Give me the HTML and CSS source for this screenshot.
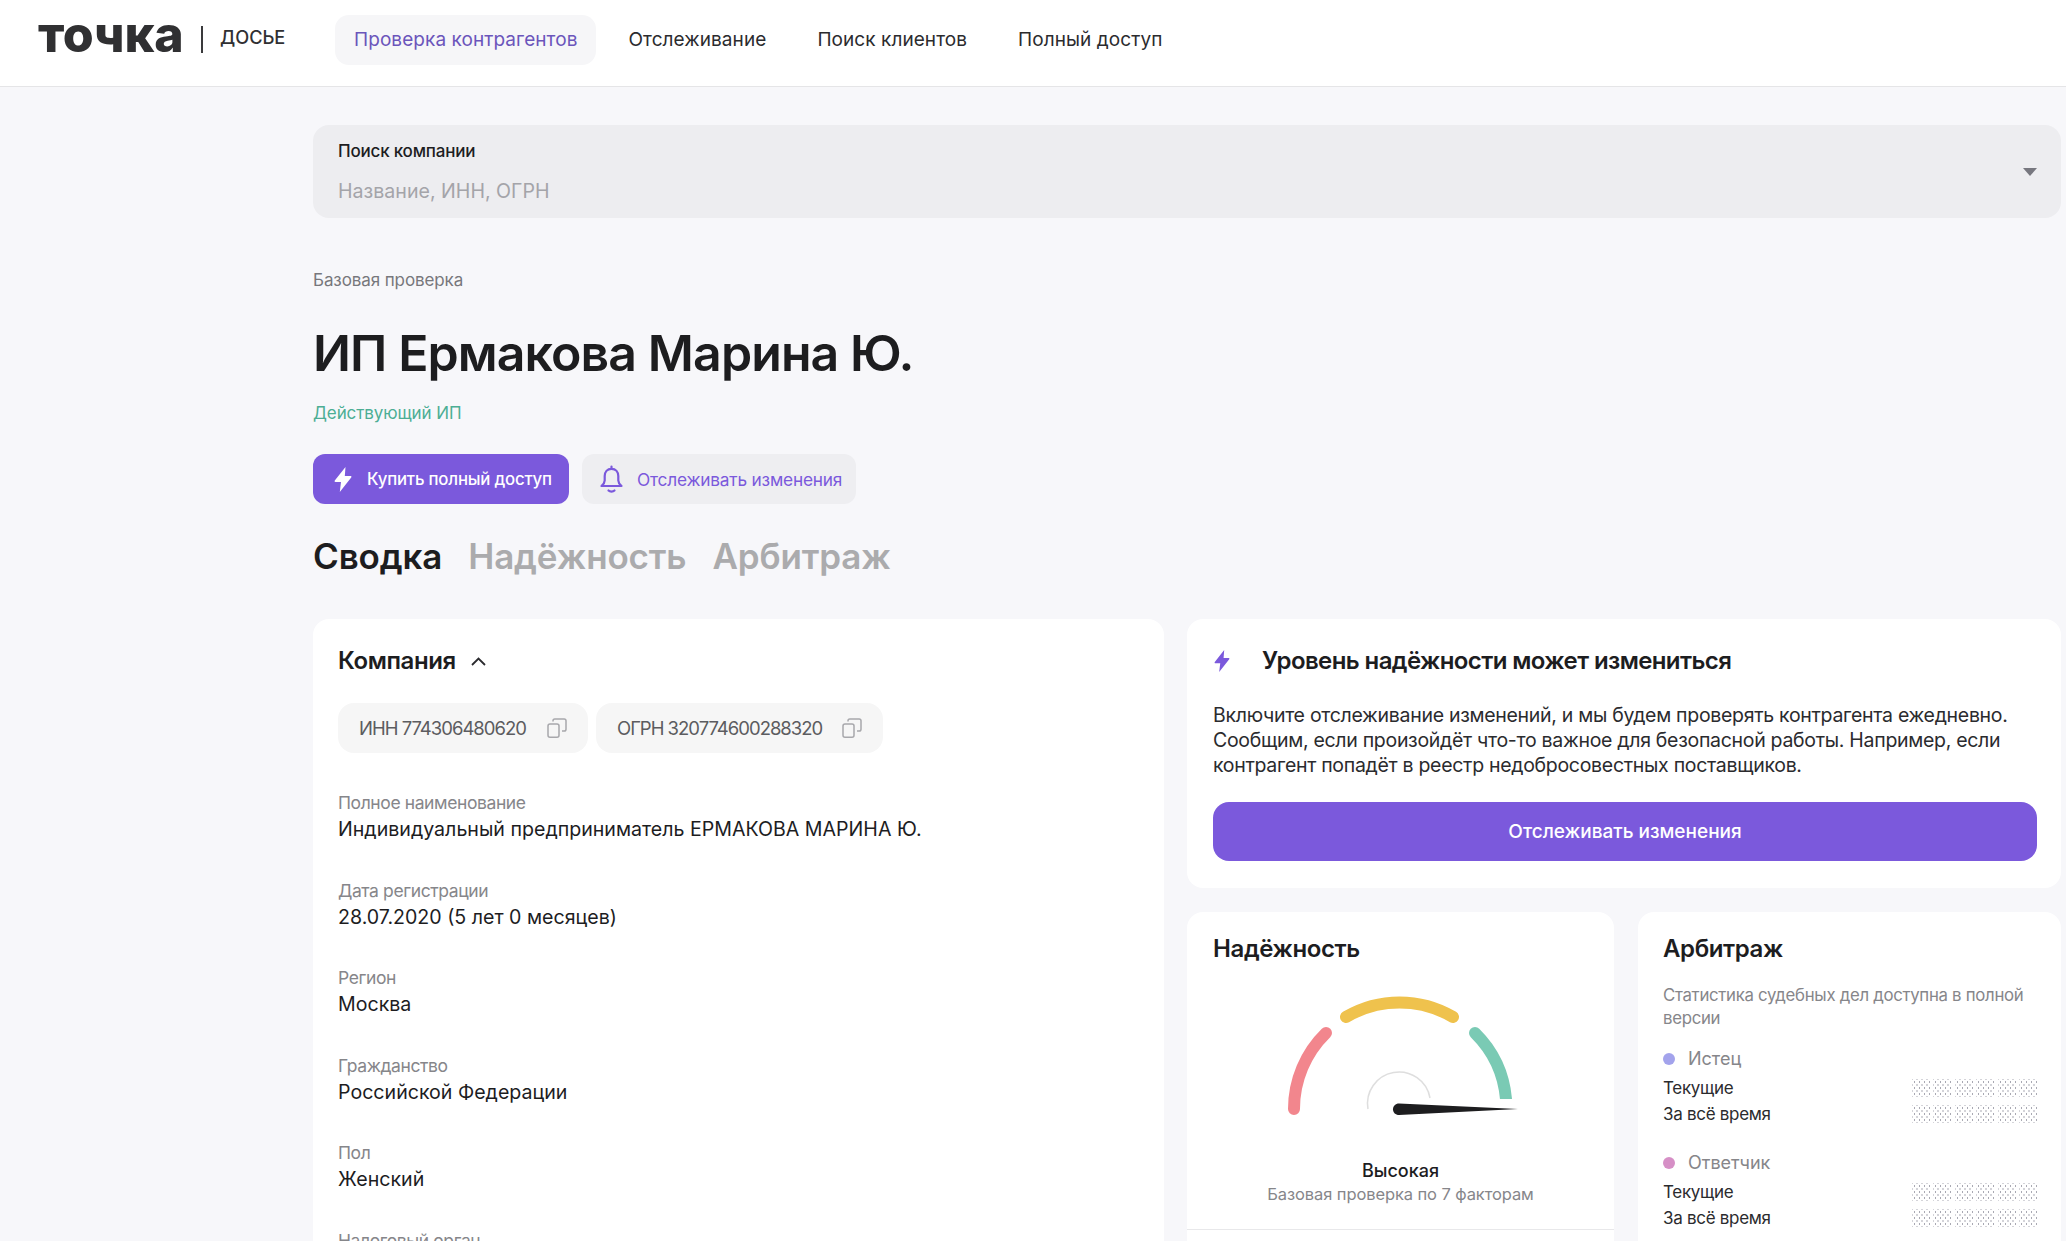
FILE: index.html
```html
<!DOCTYPE html>
<html lang="ru">
<head>
<meta charset="utf-8">
<title>Точка Досье</title>
<link rel="stylesheet" href="styles.css">
</head>
<body>
<header class="topbar">
  <div class="brand"><span class="logo">точка</span><span class="brand-sep"></span><span class="brand-sub">ДОСЬЕ</span></div>
  <nav class="nav">
    <a class="nav-item active">Проверка контрагентов</a>
    <a class="nav-item">Отслеживание</a>
    <a class="nav-item">Поиск клиентов</a>
    <a class="nav-item">Полный доступ</a>
  </nav>
</header>
<main class="page">
  <section class="search">
    <div class="search-label">Поиск компании</div>
    <div class="search-ph">Название, ИНН, ОГРН</div>
    <svg class="search-arrow" width="14" height="8" viewBox="0 0 14 8"><path d="M0 0h14L7 8z" fill="#77777f"/></svg>
  </section>
  <div class="crumb">Базовая проверка</div>
  <h1 class="title">ИП Ермакова Марина Ю.</h1>
  <div class="status">Действующий ИП</div>
  <div class="actions">
    <button class="btn btn-primary">
      <svg width="18" height="25" viewBox="0 0 18 25"><path d="M11.500 0 .8 13.600c-.5.7-.2 1.400.7 1.400H7L5.800 25 17.200 10.400c.5-.7.2-1.400-.7-1.400H10.800z" fill="#fff"/></svg>
      Купить полный доступ
    </button>
    <button class="btn btn-soft">
      <svg width="23" height="28" viewBox="0 0 23 28" fill="none" stroke="#7b59dc" stroke-width="2.200" stroke-linejoin="round" stroke-linecap="round"><path d="M11.500 1.500v2.300M11.500 3.800c-4.300 0-6.800 3.200-6.800 7.200v4.500c0 2.300-1.500 4-3.200 5.500h20c-1.700-1.500-3.200-3.200-3.200-5.500V11c0-4-2.500-7.200-6.800-7.200z"/><path d="M8.500 25.500c1.500 1.500 4.500 1.500 6 0"/></svg>
      Отслеживать изменения
    </button>
  </div>
  <div class="tabs">
    <span class="tab tab-active">Сводка</span>
    <span class="tab">Надёжность</span>
    <span class="tab">Арбитраж</span>
  </div>
  <div class="columns">
    <section class="card company">
      <h2 class="card-title">Компания
        <svg width="15" height="9" viewBox="0 0 15 9" fill="none" stroke="#2a2a2e" stroke-width="1.800"><path d="M1 8l6.500-6.500L14 8"/></svg>
      </h2>
      <div class="chips">
        <div class="chip">ИНН 774306480620
          <svg class="copy" width="20" height="20" viewBox="0 0 20 20" fill="none" stroke="#a8a8ac" stroke-width="1.500"><rect x="1" y="6" width="11" height="13.200" rx="2"/><path d="M6 3.500V2.800C6 1.800 6.800 1 7.800 1h9.400c1 0 1.800.8 1.800 1.800v8.400c0 1-.8 1.800-1.800 1.800H15"/></svg>
        </div>
        <div class="chip">ОГРН 320774600288320
          <svg class="copy" width="20" height="20" viewBox="0 0 20 20" fill="none" stroke="#a8a8ac" stroke-width="1.500"><rect x="1" y="6" width="11" height="13.200" rx="2"/><path d="M6 3.500V2.800C6 1.800 6.800 1 7.800 1h9.400c1 0 1.800.8 1.800 1.800v8.400c0 1-.8 1.800-1.800 1.800H15"/></svg>
        </div>
      </div>
      <dl class="fields">
        <div class="field"><dt>Полное наименование</dt><dd>Индивидуальный предприниматель ЕРМАКОВА МАРИНА Ю.</dd></div>
        <div class="field"><dt>Дата регистрации</dt><dd>28.07.2020 (5 лет 0 месяцев)</dd></div>
        <div class="field"><dt>Регион</dt><dd>Москва</dd></div>
        <div class="field"><dt>Гражданство</dt><dd>Российской Федерации</dd></div>
        <div class="field"><dt>Пол</dt><dd>Женский</dd></div>
        <div class="field"><dt>Налоговый орган</dt></div>
      </dl>
    </section>
    <div class="side">
      <section class="card notice">
        <h2 class="notice-title">
          <svg width="18" height="22" viewBox="0 0 18 25"><path d="M11.500 0 .8 13.600c-.5.7-.2 1.400.7 1.400H7L5.800 25 17.200 10.400c.5-.7.2-1.400-.7-1.400H10.800z" fill="#7b59dc"/></svg>
          Уровень надёжности может измениться
        </h2>
        <p class="notice-text">Включите отслеживание изменений, и мы будем проверять контрагента ежедневно. Сообщим, если произойдёт что-то важное для безопасной работы. Например, если контрагент попадёт в реестр недобросовестных поставщиков.</p>
        <button class="btn-wide">Отслеживать изменения</button>
      </section>
      <div class="side-row">
        <section class="card rely">
          <h2 class="card-title">Надёжность</h2>
          <svg class="gauge" width="240" height="132" viewBox="0 0 240 132" fill="none">
            <path d="M14 114A106 106 0 0 1 46 38" stroke="#f2868d" stroke-width="12" stroke-linecap="round"/>
            <path d="M66 22A106 106 0 0 1 173 22" stroke="#efc24d" stroke-width="12" stroke-linecap="round"/>
            <path d="M195 38A106 106 0 0 1 226 104" stroke="#7acab4" stroke-width="12" stroke-linecap="round"/>
            <rect x="219" y="104" width="14" height="8" fill="#fff"/>
            <path d="M88 114A31 31 0 0 1 150 103" stroke="#dedede" stroke-width="1.500"/>
            <path d="M119 108.500 238 114 119 120c-3.500 0-6-2.500-6-5.800 0-3.200 2.500-5.700 6-5.700z" fill="#1d1d1f"/>
          </svg>
          <div class="level">Высокая</div>
          <div class="level-sub">Базовая проверка по 7 факторам</div>
          <div class="rely-line"></div>
        </section>
        <section class="card arb">
          <h2 class="card-title">Арбитраж</h2>
          <p class="arb-desc">Статистика судебных дел доступна в полной версии</p>
          <div class="party"><span class="dot dot-plaintiff"></span>Истец</div>
          <div class="stats">
            <div class="stat"><span>Текущие</span><span class="mask"><i></i><i></i><i></i><i></i><i></i><i></i></span></div>
            <div class="stat"><span>За всё время</span><span class="mask"><i></i><i></i><i></i><i></i><i></i><i></i></span></div>
          </div>
          <div class="party party-next"><span class="dot dot-defendant"></span>Ответчик</div>
          <div class="stats">
            <div class="stat"><span>Текущие</span><span class="mask"><i></i><i></i><i></i><i></i><i></i><i></i></span></div>
            <div class="stat"><span>За всё время</span><span class="mask"><i></i><i></i><i></i><i></i><i></i><i></i></span></div>
          </div>
        </section>
      </div>
    </div>
  </div>
</main>
</body>
</html>
```
FILE: styles.css
```css
* { box-sizing: border-box; }
html, body { margin: 0; height: 100%; overflow: hidden; }
body { background: #f7f7fa; color: #1d1d1f; font-family: Inter, "Noto Sans", sans-serif; font-size: 20px; }
.topbar { display: flex; align-items: center; height: 87px; background: #fff; border-bottom: 1px solid #e5e5e7; padding: 0 0 0 38px; }
.brand { display: flex; align-items: center; width: 297px; margin-top: -8px; }
.logo { font-size: 50px; font-weight: 800; line-height: 50px; color: #303032; letter-spacing: -0.2px; width: 146px; margin-top: -11px; white-space: nowrap; }
.brand-sep { width: 2px; height: 27px; background: #3a3a3c; margin: 0 17px; }
.brand-sub { font-size: 18.200px; font-weight: 500; color: #303032; margin-top: -4px; }
.nav { display: flex; align-items: center; gap: 13px; margin-top: -6px; }
.nav-item { padding: 0 19px; height: 50px; line-height: 50px; border-radius: 14px; font-size: 19px; color: #2b2b2e; letter-spacing: 0.07px; }
.nav-item.active { background: #f6f6f8; color: #6b55bb; }
.page { padding: 38px 5px 0 313px; }
.search { position: relative; height: 93px; background: #ededf0; border-radius: 16px; padding: 14px 25px; }
.search-label { font-size: 17px; line-height: 24px; font-weight: 500; letter-spacing: -0.2px; }
.search-ph { margin-top: 15px; font-size: 19.600px; line-height: 26px; color: #a4a4a9; }
.search-arrow { position: absolute; right: 24px; top: 43px; }
.crumb { margin-top: 50px; font-size: 17px; line-height: 24px; color: #77777c; letter-spacing: -0.1px; }
.title { margin: 29px 0 0; font-size: 50px; line-height: 64px; font-weight: 600; letter-spacing: -0.9px; color: #1d1d1f; }
.status { margin-top: 16px; font-size: 17px; line-height: 24px; color: #4cae94; letter-spacing: -0.1px; }
.actions { display: flex; gap: 13px; margin-top: 29px; }
.btn { display: flex; align-items: center; gap: 15px; height: 50px; border: 0; border-radius: 12px; font: 500 16.800px Inter, sans-serif; letter-spacing: -0.2px; white-space: nowrap; }
.btn-primary { width: 256px; padding: 0 0 0 21px; background: #7b59dc; color: #fff; }
.btn-soft { width: 274px; padding: 0 0 0 18px; gap: 14px; background: #eeeef1; color: #7b59dc; font-weight: 400; font-size: 17.300px; }
.tabs { display: flex; gap: 26px; margin-top: 30px; height: 44px; align-items: center; }
.tab { font-size: 35px; line-height: 44px; font-weight: 600; color: #ababad; letter-spacing: -0.15px; }
.tab-active { color: #1d1d1f; }
.columns { display: flex; gap: 23px; margin-top: 41px; align-items: flex-start; }
.card { background: #fff; border-radius: 16px; }
.company { width: 851px; height: 800px; padding: 24px 25px; flex: none; }
.card-title { display: flex; align-items: center; gap: 15px; margin: 0; font-size: 24px; line-height: 36px; font-weight: 600; color: #1d1d1f; letter-spacing: -0.4px; }
.chips { display: flex; gap: 8px; margin-top: 24px; }
.chip { display: flex; align-items: center; justify-content: space-between; height: 50px; padding: 0 21px; border-radius: 16px; background: #f6f6f6; font-size: 18.500px; color: #5c5c60; letter-spacing: -1px; white-space: nowrap; }
.chip:first-child { width: 250px; }
.chip:last-child { width: 287px; }
.fields { margin: 38px 0 0; }
.field { height: 87.500px; }
dt { font-size: 17.500px; line-height: 24px; color: #86868a; letter-spacing: -0.4px; }
dd { margin: 1px 0 0; font-size: 19.600px; line-height: 27px; color: #1d1d1f; }
.side { flex: 1; display: flex; flex-direction: column; gap: 24px; }
.notice { height: 269px; padding: 24px 24px 0 26px; }
.notice-title { display: flex; align-items: center; gap: 31px; margin: 0; font-size: 24px; line-height: 36px; font-weight: 600; letter-spacing: -0.6px; }
.notice-text { margin: 24px 0 0; font-size: 19.500px; line-height: 25px; color: #2b2b2e; letter-spacing: -0.3px; }
.btn-wide { display: block; width: 100%; height: 59px; margin-top: 24px; border: 0; border-radius: 16px; background: #7b59dc; color: #fff; font: 500 19px Inter, sans-serif; }
.side-row { display: flex; gap: 24px; }
.rely { position: relative; width: 427px; height: 600px; padding: 19px 26px 0; }
.gauge { display: block; margin: 28px auto 0; position: relative; left: -1px; }
.level { margin-top: 32px; text-align: center; font-size: 18px; line-height: 24px; font-weight: 500; }
.level-sub { text-align: center; font-size: 16.500px; line-height: 22px; color: #86868a; letter-spacing: -0.1px; }
.rely-line { height: 1px; margin: 24px -26px 0; background: #e8e8ea; }
.arb { flex: 1; min-width: 0; height: 600px; padding: 19px 24px 0 25px; }
.arb-desc { margin: 17px 0 0; font-size: 16.800px; line-height: 23px; color: #86868a; letter-spacing: -0.3px; }
.party { display: flex; align-items: center; gap: 13px; margin-top: 17px; font-size: 18px; line-height: 24px; color: #86868a; }
.party-next { margin-top: 24px; }
.dot { width: 12px; height: 12px; border-radius: 50%; }
.dot-plaintiff { background: #a3a3ec; }
.dot-defendant { background: #d68fc6; }
.stats { margin-top: 4px; }
.stat { display: flex; align-items: center; justify-content: space-between; height: 26px; font-size: 17px; letter-spacing: -0.3px; color: #2b2b2e; }
.mask { display: flex; gap: 3.500px; }
.mask i { display: block; width: 18px; height: 18px; background-image: radial-gradient(circle, #a9a9b3 0.8px, transparent 1.100px), radial-gradient(circle, #a9a9b3 0.8px, transparent 1.100px); background-size: 5px 6px; background-position: 0 0, 2.500px 3px; }
```
